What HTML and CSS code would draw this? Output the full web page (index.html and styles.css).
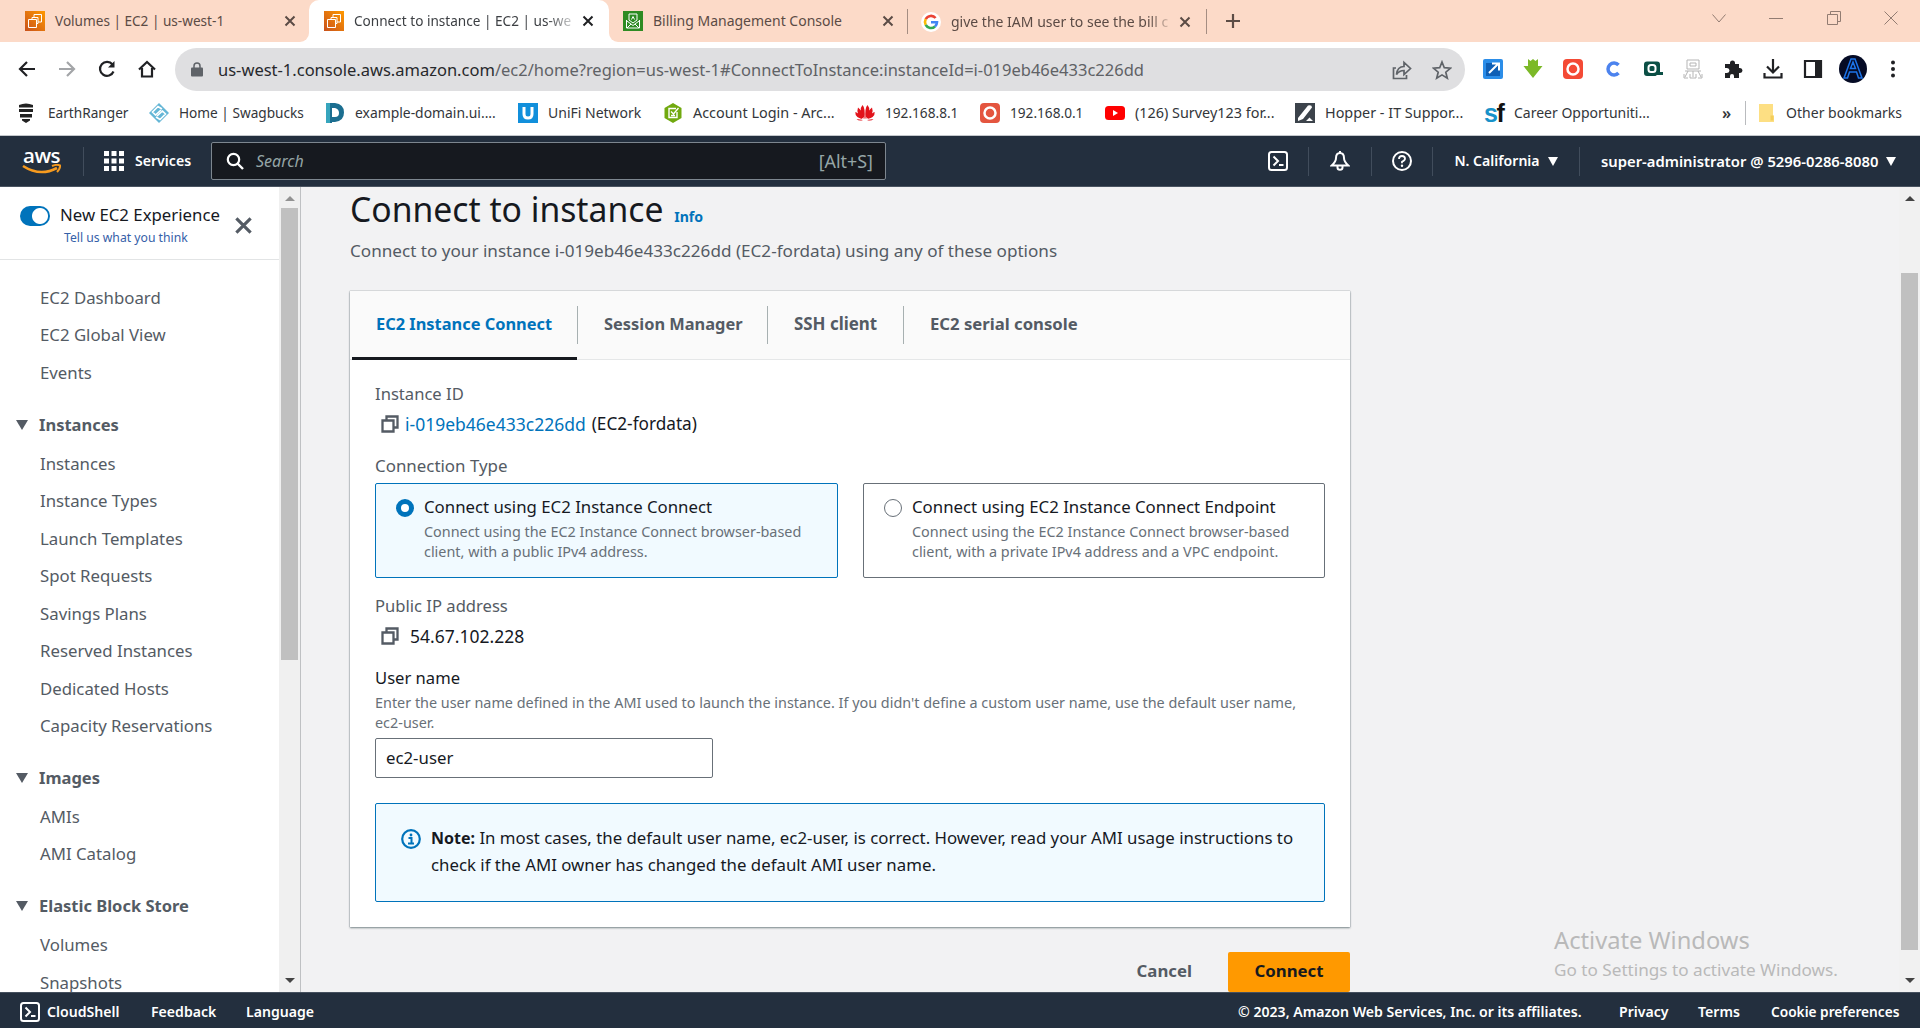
FILE: index.html
```html
<!DOCTYPE html>
<html lang="en">
<head>
<meta charset="utf-8">
<title>Connect to instance | EC2 | us-west-1</title>
<link rel="stylesheet" href="styles.css">
</head>
<body>
<svg class="defs" width="0" height="0">
  <symbol id="x" viewBox="0 0 12 12"><path d="M1.5 1.5l9 9M10.5 1.5l-9 9" fill="none" stroke="currentColor" stroke-width="2"/></symbol>
  <symbol id="ec2" viewBox="0 0 20 20"><defs><linearGradient id="og" x1="0" y1="1" x2="1" y2="0"><stop offset="0" stop-color="#c8511b"/><stop offset="1" stop-color="#f90"/></linearGradient></defs><path fill="url(#og)" d="M0 0h20v20H0z"/><g fill="none" stroke="#fff" stroke-width="1"><path d="M3.5 8.5h8v8h-8z"/><path d="M7 8.500V6.500h6v6h-1.500M9 6.500V3.500h7.500v7.500H13"/></g></symbol>
  <symbol id="copy" viewBox="0 0 18 18"><path d="M1.500 5.500h11v11h-11zM5.500 5V1.500h11v11H13" fill="none" stroke="currentColor" stroke-width="2.300"/></symbol>
  <symbol id="shell" viewBox="0 0 20 20"><rect x="1" y="1" width="18" height="18" rx="2.500" fill="none" stroke="currentColor" stroke-width="2"/><path d="M5.500 5.500l4.500 4.500-4.500 4.500M11 14h4.500" fill="none" stroke="currentColor" stroke-width="2"/></symbol>
  <symbol id="o-red" viewBox="0 0 20 20"><rect width="20" height="20" rx="4" fill="currentColor"/><circle cx="10" cy="10" r="5.500" fill="none" stroke="#fff" stroke-width="2.500"/></symbol>
</svg>

<header class="browser">
  <div class="tabs">
    <div class="tab"><svg class="fav"><use href="#ec2"/></svg><span class="tab-title tight">Volumes | EC2 | us-west-1</span><svg class="close"><use href="#x"/></svg></div>
    <div class="tab active"><svg class="fav"><use href="#ec2"/></svg><span class="tab-title tight fade">Connect to instance | EC2 | us-we</span><svg class="close"><use href="#x"/></svg></div>
    <div class="tab"><svg class="fav" viewBox="0 0 20 20"><path fill="#2e8b23" d="M0 0h20v20H0z"/><path d="M6 3h8v6l-4 3-4-3zM3.500 9v8h13V9M4 10l6 4.500 6-4.500M4 17l4-4M16 17l-4-4M8.500 8.500l1.500-3 1.500 3" fill="none" stroke="#fff"/></svg><span class="tab-title">Billing Management Console</span><svg class="close"><use href="#x"/></svg></div>
    <div class="tab divided"><svg class="fav" viewBox="0 0 20 20"><circle cx="10" cy="10" r="10" fill="#fff"/><g fill="none" stroke-width="2.600"><path d="M14.600 6A6 6 0 0 0 4.700 7.200" stroke="#ea4335"/><path d="M4.700 7.200a6 6 0 0 0 0 5.600" stroke="#fbbc05"/><path d="M4.700 12.800A6 6 0 0 0 14 14.500" stroke="#34a853"/><path d="M14 14.500A6 6 0 0 0 16 10.200H10" stroke="#4285f4"/></g></svg><span class="tab-title fade late">give the IAM user to see the bill c</span><svg class="close"><use href="#x"/></svg></div>
    <svg class="plus" viewBox="0 0 16 16"><path d="M8 1v14M1 8h14" stroke="#5c4c45" stroke-width="2.200"/></svg>
    <div class="window-buttons">
      <svg viewBox="0 0 14 14"><path d="M.5 3.500L7 11l6.500-7.500"/></svg>
      <svg viewBox="0 0 14 14"><path d="M0 7.500h14"/></svg>
      <svg viewBox="0 0 14 14"><path d="M.5 3.500h10v10H.5zM3.500 3.500v-3h10v10h-3"/></svg>
      <svg viewBox="0 0 14 14"><path d="M.5.5l13 13M13.500.5l-13 13"/></svg>
    </div>
  </div>

  <div class="toolbar">
    <div class="nav-buttons">
      <svg viewBox="0 0 18 18"><path d="M17 9H2M9 2L2 9l7 7"/></svg>
      <svg class="off" viewBox="0 0 18 18"><path d="M1 9h15M9 2l7 7-7 7"/></svg>
      <svg viewBox="0 0 18 18"><path d="M15.500 11.500A7 7 0 1 1 14.500 4.500"/><path d="M16.500 1v6.500H10z" fill="#202124" stroke="none"/></svg>
      <svg viewBox="0 0 18 18"><path d="M1 9.500L9 2l8 7.500M4 8v8.500h10V8"/></svg>
    </div>
    <div class="omnibox">
      <svg class="lock" viewBox="0 0 12 14"><rect y="5" width="12" height="9" rx="1" fill="#5f6368"/><path d="M3 6V3.500a3 3 0 0 1 6 0V6" fill="none" stroke="#5f6368" stroke-width="1.500"/></svg>
      <span class="url">us-west-1.console.aws.amazon.com<span class="path">/ec2/home?region=us-west-1#ConnectToInstance:instanceId=i-019eb46e433c226dd</span></span>
      <svg class="omni-icon" viewBox="0 0 20 20"><path d="M4 8H1.500v10.500h13V15M4.500 14.500c.5-5 3.500-8 7.500-8V2.500l6.500 6-6.500 6v-4c-3.500 0-5.500 1-7.500 4z"/></svg>
      <svg class="omni-icon" viewBox="0 0 20 20"><path d="M10 2l2.300 5.700 6.200.5-4.700 4 1.500 6L10 14.900l-5.300 3.300 1.500-6-4.700-4 6.200-.5z"/></svg>
    </div>
    <div class="extensions">
      <svg viewBox="0 0 20 20"><rect width="20" height="20" rx="2" fill="#2b8de8"/><path d="M3 4h14v13H3z" fill="#0f5fb5"/><path d="M6 14l9-9M9 4.500h7v7" fill="none" stroke="#fff" stroke-width="2"/></svg>
      <svg viewBox="0 0 20 20"><path d="M5 0l2.500 2L10 0l2.500 2L15 0v7h4.500L10 19 .5 7H5z" fill="#7cb928"/></svg>
      <svg class="ext-o"><use href="#o-red"/></svg>
      <svg viewBox="0 0 20 20"><path d="M15.500 6A6 6 0 1 0 15.500 14" fill="none" stroke="#4c83ee" stroke-width="3.500"/></svg>
      <svg viewBox="0 0 20 20"><path d="M4 2.500h10q3 0 3 3V13h3v3h-6l-1.500 1H4q-3 0-3-3V5.500q0-3 3-3z" fill="#0b4f45"/><rect x="5.500" y="6" width="7" height="7" rx="2.500" fill="none" stroke="#fff" stroke-width="2"/></svg>
      <svg viewBox="0 0 20 20"><path d="M4 1h12v9H4zM7 4h6v3H7zM2 12h16M5 12l-3 6M10 12v6M15 12l3 6M1 15v4h4M19 15v4h-4M7 15v4h6v-4" fill="none" stroke="#b5b5b5"/></svg>
      <svg viewBox="0 0 20 20"><path d="M2 5h5V4a2.500 2.500 0 0 1 5 0v1h4v4h1a2.500 2.500 0 0 1 0 5h-1v5h-5v-2a2 2 0 0 0-4 0v2H2v-5h2a2 2 0 0 0 0-5H2z" fill="#202124"/></svg>
      <svg viewBox="0 0 20 20"><path d="M10 0v13M4 7.500l6 6 6-6M1.500 14v4.500h17V14" fill="none" stroke="#202124" stroke-width="2.200"/></svg>
      <svg viewBox="0 0 20 20"><path d="M2 2h16v16H2z" fill="none" stroke="#202124" stroke-width="2.200"/><path d="M12 2h6v16h-6z" fill="#202124"/></svg>
      <svg class="avatar" viewBox="0 0 28 28"><circle cx="14" cy="14" r="14" fill="#050b25"/><path d="M5 23L12 4h4l7 19h-3.500l-2-6h-7l-2 6zM11.500 13.500h5L14 7z" fill="none" stroke="#1c74ea" stroke-width="1.500"/></svg>
      <svg viewBox="0 0 20 20"><g fill="#202124"><circle cx="10" cy="3.500" r="2"/><circle cx="10" cy="10" r="2"/><circle cx="10" cy="16.500" r="2"/></g></svg>
    </div>
  </div>

  <nav class="bookmarks">
    <span class="bm t1"><svg viewBox="0 0 20 20"><path d="M1 2q7-3 14 0v2.500H1zM1 6h14v3H1zM2 11h12v3.500H2zM4 16h8v1.500L8 20l-4-2.500z" fill="#222"/></svg>EarthRanger</span>
    <span class="bm t2"><svg viewBox="0 0 20 20"><path d="M10 0l10 10-10 10L0 10z" fill="#64b6d6"/><path d="M13 6L9 3.500 3.500 9l3 3L12 7M7 14l4 2.500 5.500-5.500-3-3L8 13" fill="none" stroke="#fff" stroke-width="1.600"/></svg>Home | Swagbucks</span>
    <span class="bm t3"><svg viewBox="0 0 20 20"><path d="M1 0h9q9 1 9 9.500T10 19H7v1H1z" fill="#1b6e90"/><path d="M7 5h3q4 1 4 5t-4 4H7z" fill="#fff"/><path d="M1 0h4v20H1z" fill="#36a5bd"/></svg>example-domain.ui....</span>
    <span class="bm"><svg viewBox="0 0 20 20"><path d="M0 0h20v20H0z" fill="#118fdb"/><path d="M6 4v7q0 4 4 4t4-4V4" fill="none" stroke="#fff" stroke-width="3"/></svg>UniFi Network</span>
    <span class="bm t4"><svg viewBox="0 0 20 20"><path d="M10 0l8.500 5v10L10 20l-8.500-5V5z" fill="#71a90f"/><path d="M14 9v5.500H6v-9h7M8 8.500l2.500 2.500 5-6M8 12.500h4" fill="none" stroke="#fff" stroke-width="1.400"/></svg>Account Login - Arc...</span>
    <span class="bm t1"><svg viewBox="0 0 20 20"><g fill="#e2131b"><path d="M9.500 16Q3 7 7.500 2q3 3 2 14zM10.500 16Q17 7 12.500 2q-3 3-2 14zM8.500 16Q.5 11 3 4.500 7 7 8.500 16zM11.500 16Q19.500 11 17 4.500 13 7 11.500 16zM7.500 16Q0 14.500.3 9 4 10 7.500 16zM12.500 16q7.500-1.500 7.200-7-3.700 1-7.200 7zM8 17q-4 1.500-6.500-1zM12 17q4 1.500 6.500-1z"/></g></svg>192.168.8.1</span>
    <span class="bm t1"><svg class="bm-o"><use href="#o-red"/></svg>192.168.0.1</span>
    <span class="bm t4"><svg viewBox="0 0 20 20"><rect y="3" width="20" height="14" rx="3.500" fill="#f00"/><path d="M8 7l5 3-5 3z" fill="#fff"/></svg>(126) Survey123 for...</span>
    <span class="bm t4"><svg viewBox="0 0 20 20"><path d="M0 0h20v20H0z" fill="#3c434b"/><path d="M3 15L13 2.500q4-1 4 2L8 16l-5 2zM11 18l3.500-3.500L18 18z" fill="#fff"/></svg>Hopper - IT Suppor...</span>
    <span class="bm"><span class="sf"><b>s</b>f</span>Career Opportuniti...</span>
    <span class="more">»</span>
    <span class="bm other"><svg viewBox="0 0 20 20"><path d="M2 1h14v11.500h1V19H2z" fill="#fddf83"/><path d="M13.500 12.500h3v5h-3z" fill="#f3cd5a"/></svg>Other bookmarks</span>
  </nav>
</header>

<div class="aws-nav">
  <div class="logo">aws<svg viewBox="0 0 40 11"><path d="M1 2q17 11 34 2" fill="none" stroke="#f79b1f" stroke-width="2.600"/><path d="M30 2q5-2 8-.5Q38.500 4 35 8" fill="none" stroke="#f79b1f" stroke-width="2"/></svg></div>
  <div class="services"><svg viewBox="0 0 20 20"><path fill="#fff" d="M0 0h5v5H0zM7.500 0h5v5h-5zM15 0h5v5h-5zM0 7.500h5v5H0zM7.500 7.500h5v5h-5zM15 7.500h5v5h-5zM0 15h5v5H0zM7.500 15h5v5h-5zM15 15h5v5h-5z"/></svg>Services</div>
  <div class="search"><svg viewBox="0 0 18 18"><circle cx="7.500" cy="7.500" r="5.700" fill="none" stroke="#fff" stroke-width="2.200"/><path d="M11.500 11.500l5.500 5.500" stroke="#fff" stroke-width="2.400"/></svg><i>Search</i><span>[Alt+S]</span></div>
  <div class="aws-tools">
    <div><svg><use href="#shell"/></svg></div>
    <div><svg viewBox="0 0 20 20"><path d="M10 2C7 2 6 4.500 6 7c0 3.500-1.500 5-4.300 7.500h16.600C15.500 12 14 10.500 14 7c0-2.500-1-5-4-5zM7.500 15v1.500q0 2.300 2.500 2.300t2.500-2.300V15M10 0v2" fill="none" stroke="#fff" stroke-width="2"/></svg></div>
    <div><svg viewBox="0 0 20 20"><circle cx="10" cy="10" r="9" fill="none" stroke="#fff" stroke-width="2"/><path d="M7 8q0-3 3-3t3 2.700q0 1.600-3 3v1.500" fill="none" stroke="#fff" stroke-width="1.800"/><circle cx="10" cy="14.700" r="1.200" fill="#fff"/></svg></div>
    <div>N. California<i class="caret"></i></div>
    <div class="account">super-administrator @ 5296-0286-8080<i class="caret"></i></div>
  </div>
</div>

<div class="page">
  <aside class="side">
    <div class="side-content">
      <div class="side-head">
        <span class="toggle"></span>
        <div class="experience">New EC2 Experience<a>Tell us what you think</a></div>
        <svg><use href="#x"/></svg>
      </div>
      <ul class="menu">
        <li>EC2 Dashboard</li><li>EC2 Global View</li><li>Events</li>
        <li class="group">Instances</li>
        <li>Instances</li><li>Instance Types</li><li>Launch Templates</li><li>Spot Requests</li><li>Savings Plans</li><li>Reserved Instances</li><li>Dedicated Hosts</li><li>Capacity Reservations</li>
        <li class="group">Images</li>
        <li>AMIs</li><li>AMI Catalog</li>
        <li class="group">Elastic Block Store</li>
        <li>Volumes</li><li>Snapshots</li>
      </ul>
    </div>
    <div class="scrollbar side-scroll"><i class="up"></i><i class="thumb"></i><i class="down"></i></div>
  </aside>

  <main class="main">
    <h1>Connect to instance <a>Info</a></h1>
    <p class="lead">Connect to your instance i-019eb46e433c226dd (EC2-fordata) using any of these options</p>
    <section class="card">
      <div class="card-tabs">
        <span class="selected">EC2 Instance Connect</span><span class="tab2">Session Manager</span><span class="tab3">SSH client</span><span class="tab4">EC2 serial console</span>
      </div>
      <div class="card-body">
        <div class="label">Instance ID</div>
        <div class="value"><svg><use href="#copy"/></svg><a>i-019eb46e433c226dd</a><span class="alias">(EC2-fordata)</span></div>
        <div class="label type-label">Connection Type</div>
        <div class="tiles">
          <div class="tile checked"><span class="radio"></span><div><div class="tile-title">Connect using EC2 Instance Connect</div><div class="hint">Connect using the EC2 Instance Connect browser-based<br>client, with a public IPv4 address.</div></div></div>
          <div class="tile"><span class="radio"></span><div><div class="tile-title">Connect using EC2 Instance Connect Endpoint</div><div class="hint">Connect using the EC2 Instance Connect browser-based<br>client, with a private IPv4 address and a VPC endpoint.</div></div></div>
        </div>
        <div class="label ip-label">Public IP address</div>
        <div class="value ip"><svg><use href="#copy"/></svg><span>54.67.102.228</span></div>
        <div class="label dark">User name</div>
        <div class="hint">Enter the user name defined in the AMI used to launch the instance. If you didn't define a custom user name, use the default user name,<br>ec2-user.</div>
        <div class="input">ec2-user</div>
        <div class="note"><svg viewBox="0 0 20 20"><circle cx="10" cy="10" r="8.800" fill="none" stroke="#0073bb" stroke-width="2.200"/><path d="M7.500 9H10.500v5.200M7 14.500h6" fill="none" stroke="#0073bb" stroke-width="2"/><circle cx="10" cy="6" r="1.400" fill="#0073bb"/></svg><p><b>Note:</b> In most cases, the default user name, ec2-user, is correct. However, read your AMI usage instructions to<br>check if the AMI owner has changed the default AMI user name.</p></div>
      </div>
    </section>
    <div class="actions"><span>Cancel</span><span class="primary">Connect</span></div>
  </main>

  <div class="scrollbar page-scroll"><i class="up"></i><i class="thumb"></i><i class="down"></i></div>
  <div class="watermark"><div>Activate Windows</div>Go to Settings to activate Windows.</div>
</div>

<footer class="footer">
  <svg><use href="#shell"/></svg><span class="f-shell">CloudShell</span><span class="f-feed">Feedback</span><span>Language</span>
  <span class="copyright">© 2023, Amazon Web Services, Inc. or its affiliates.</span><span class="f-privacy">Privacy</span><span class="f-terms">Terms</span><span class="f-cookie">Cookie preferences</span>
</footer>
</body>
</html>
```
FILE: styles.css
```css
* { box-sizing: border-box; }
body { margin: 0; width: 1920px; height: 1028px; overflow: hidden; display: flex; flex-direction: column; font: 16.8px/24px "Noto Sans", "Open Sans", sans-serif; color: #16191f; background: #f2f2f3; }
.defs { position: absolute; }
svg { flex: none; display: block; }
h1, p, ul { margin: 0; padding: 0; font-weight: 400; }

/* browser chrome */
.browser { height: 136px; background: #fff; border-bottom: 1px solid #c4c8cc; font-size: 14px; }
.tabs { height: 42px; display: grid; grid-template-columns: 309px 300px 298px 300px 52px 1fr; background: linear-gradient(90deg, #fff 0, #fff 640px, #fcdac8 640px); }
.tab { display: flex; align-items: center; padding: 0 13px 0 25px; background: #fcdac8; color: #5b4b45; }
.tab:nth-child(1) { border-bottom-right-radius: 9px; }
.tab:nth-child(3) { padding: 0 13px 0 14px; border-bottom-left-radius: 9px; }
.tab.active { background: linear-gradient(#fcdac8 50%, #fff 50%); color: #3c3f43; padding: 0 15px; position: relative; z-index: 0; }
.active::before { content: ""; position: absolute; inset: 0; border-radius: 10px 10px 0 0; background: #fff; z-index: -1; }
.divided { padding: 0 15px 0 13px; margin: 9px 0 8px; border: solid #a48d82; border-width: 0 1px; }
.fav { width: 20px; height: 20px; }
.tab-title { margin-left: 10px; width: 224px; white-space: nowrap; line-height: 24px; }
.tight { font-size: 13.6px; }
.fade { -webkit-mask-image: linear-gradient(90deg, #000 86%, rgba(0,0,0,.2) 98%); mask-image: linear-gradient(90deg, #000 86%, rgba(0,0,0,.2) 98%); }
.late { -webkit-mask-image: linear-gradient(90deg, #000 88%, rgba(0,0,0,.15) 98%); mask-image: linear-gradient(90deg, #000 88%, rgba(0,0,0,.15) 98%); }
.close { width: 12px; height: 12px; margin-left: auto; }
.active .close { color: #202124; }
.plus { width: 16px; height: 16px; place-self: center; }
.window-buttons { display: flex; justify-content: flex-end; gap: 43.500px; padding: 11px 22px 0 0; }
.window-buttons svg { width: 14px; height: 14px; fill: none; stroke: #927c72; }
.toolbar { height: 52px; padding-top: 6px; display: flex; }
.nav-buttons { width: 175px; padding-left: 18px; display: flex; align-items: center; gap: 22px; height: 41px; }
.nav-buttons svg { width: 18px; height: 18px; fill: none; stroke: #202124; stroke-width: 2.200; }
.nav-buttons .off { stroke: #a3a5a8; }
.omnibox { width: 1290px; height: 43px; border-radius: 22px; background: #dfdfe1; display: flex; align-items: center; padding: 0 13px 0 16px; }
.lock { width: 12px; height: 15px; margin-right: 15px; }
.url { font-size: 16.500px; color: #27292c; margin-right: auto; white-space: nowrap; }
.path { color: #606266; }
.omni-icon { width: 20px; height: 20px; margin-left: 20px; fill: none; stroke: #5f6368; stroke-width: 1.700; }
.extensions { display: grid; grid-template-columns: repeat(11, 40px); height: 42px; align-items: center; justify-items: center; margin-left: 7.500px; }
.extensions svg { width: 20px; height: 20px; }
.extensions .avatar { width: 28px; height: 28px; }
.ext-o { color: #f44a35; }
.bookmarks { height: 38px; padding: 0 18px; display: grid; grid-template-columns: 131px 176px 193px 145px 192px 125px 125px 190px 189px 238px 21px 1fr; align-items: center; color: #33363a; }
.bm { display: flex; align-items: center; gap: 10px; white-space: nowrap; }
.bm svg { width: 20px; height: 20px; }
.t1, .t2 { font-size: 13.650px; }
.t3 { font-size: 13.900px; }
.t4 { font-size: 14.400px; }
.bm-o { color: #e4553f; }
.sf { width: 20px; font: 700 25px/20px "Liberation Sans", sans-serif; letter-spacing: -1.500px; color: #111; }
.sf b { color: #1892c9; }
.more { font-weight: 600; font-size: 16px; }
.other { border-left: 1px solid #b9bbbe; padding-left: 11px; height: 24px; justify-self: end; gap: 9px; }

/* console navigation */
.aws-nav { height: 51px; background: #232f3e; border-bottom: 1px solid #4a5461; color: #fff; display: flex; align-items: center; font-size: 14.100px; font-weight: 600; }
.logo { width: 84px; height: 29px; border-right: 1px solid #414d5c; padding-left: 23px; font: 600 20.500px/16px "Open Sans", sans-serif; letter-spacing: -.5px; }
.logo svg { width: 40px; height: 11px; margin: 1px 0 0 -1px; }
.services { width: 127px; padding-left: 20px; display: flex; align-items: center; gap: 11px; }
.services svg { width: 20px; height: 20px; }
.search { width: 675px; height: 38px; border: 1px solid #7d868f; border-radius: 2px; background: #16191f; display: flex; align-items: center; padding: 0 12px 0 14px; font-size: 17px; font-weight: 400; color: #95a5a6; }
.search svg { width: 18px; height: 18px; margin-right: 12px; }
.search i { font-size: 16px; }
.search span { margin-left: auto; font-size: 17.900px; }
.aws-tools { margin-left: auto; display: grid; grid-template-columns: 61px 63px 61px 147px 341px; height: 29px; }
.aws-tools div { border-left: 1px solid #414d5c; display: flex; align-items: center; justify-content: center; }
.aws-tools div:first-child { border-left: 0; }
.aws-tools .account { font-size: 14.800px; justify-content: flex-start; padding-left: 21px; }
.aws-tools svg { width: 20px; height: 20px; }
.caret { margin-left: 8px; border: 5px solid transparent; border-top: 9px solid #fff; border-bottom: 0; }

/* page */
.page { height: 805px; display: flex; position: relative; overflow: hidden; }
.side { width: 301px; display: flex; background: #fff; border-right: 1px solid #bfc1c3; }
.side-content { width: 279px; }
.side-head { height: 73px; border-bottom: 1px solid #e2e4e5; display: flex; padding: 16px 0 0 20px; }
.toggle { width: 30px; height: 20px; margin-top: 3px; border-radius: 10px; background: radial-gradient(circle at 20px 10px, #fff 7.500px, #0073bb 8.500px); }
.experience { width: 184px; padding-left: 10px; white-space: nowrap; }
.experience a { display: block; font-size: 12.200px; line-height: 22px; padding-left: 4px; color: #3560a8; }
.side-head svg { width: 19px; height: 19px; margin-top: 13px; color: #545b64; }
.menu { list-style: none; padding-top: 19px; color: #545b64; }
.menu li { height: 37.500px; padding-left: 40px; display: flex; align-items: center; }
.menu .group { margin: 14.500px 0 1.300px; padding-left: 16px; font-weight: 700; font-size: 16.500px; }
.group::before { content: ""; border: 6px solid transparent; border-top: 10px solid #545b64; border-bottom: 0; margin-right: 11px; }
.scrollbar { display: flex; flex-direction: column; align-items: center; background: #f0f0f0; }
.scrollbar i { flex: none; }
.up { margin-top: 9px; border: 5px solid transparent; border-bottom: 5px solid #929292; border-top: 0; }
.down { margin: auto 0 9px; border: 5px solid transparent; border-top: 5px solid #444; border-bottom: 0; }
.thumb { width: 17px; background: #c0c0c0; }
.side-scroll { width: 21px; }
.side-scroll .thumb { margin-top: 7px; height: 452px; }
.page-scroll { width: 21px; margin-left: auto; background: #f1f1f1; }
.page-scroll .thumb { margin-top: 72px; height: 677px; }
.page-scroll .up { border-bottom-color: #444; }

.main { width: 1000px; margin-left: 49px; }
h1 { font-size: 33.700px; line-height: 44px; }
h1 a { font-size: 14.100px; font-weight: 700; color: #0073bb; margin-left: 2px; }
.lead { font-size: 17.130px; color: #545b64; }
.card { margin-top: 28px; height: 636px; background: #fff; box-shadow: 0 1px 2px rgba(0,28,36,.45), 0 0 1px rgba(0,28,36,.5); }
.card-tabs { height: 69px; background: #fafafa; border-bottom: 1px solid #e5e7e8; display: flex; padding-left: 2px; color: #545b64; font-weight: 700; font-size: 16.400px; }
.card-tabs span { height: 38px; margin-top: 15px; line-height: 36px; padding-left: 26px; white-space: nowrap; border-left: 1px solid #a7b0b1; }
.card-tabs .selected { width: 225px; height: 69px; margin-top: 0; padding: 15px 0 0 24px; border-left: 0; border-bottom: 3px solid #16191f; color: #0073bb; }
.card-tabs .tab2 { width: 190px; }
.card-tabs .tab3 { width: 136px; font-size: 16.900px; }
.card-tabs .tab4 { font-size: 16.700px; }
.card-body { padding: 22px 25px 0; }
.label { color: #545b64; font-size: 16.600px; }
.value { height: 24px; margin-top: 6px; padding-left: 6px; display: flex; align-items: center; font-size: 17.500px; }
.value svg { width: 18px; height: 18px; color: #545b64; margin-right: 6px; }
.value a { color: #0073bb; }
.alias { margin-left: 6px; font-size: 17.200px; }
.type-label { margin-top: 18px; font-size: 16.900px; }
.tiles { margin-top: 5px; display: grid; grid-template-columns: 463px 462px; gap: 25px; }
.tile { height: 95px; border: 1px solid #687078; border-radius: 2px; display: flex; padding: 10px 0 0 20px; white-space: nowrap; background: #fff; }
.tile-title { line-height: 26px; }
.tile.checked { background: #f1faff; border-color: #0073bb; }
.radio { width: 18px; height: 18px; border: 1.500px solid #687078; border-radius: 50%; margin: 5px 10px 0 0; background: #fff; }
.checked .radio { border: 5.500px solid #0073bb; }
.hint { font-size: 14.400px; line-height: 20px; color: #687078; white-space: nowrap; }
.tile .hint { margin-top: 2px; }
.ip-label { margin-top: 16px; }
.ip svg { margin-right: 11px; }
.dark { color: #16191f; margin-top: 18px; }
.dark + .hint { margin-top: 3px; }
.input { width: 338px; height: 40px; margin-top: 5px; border: 1px solid #687078; border-radius: 2px; line-height: 37px; padding-left: 10px; }
.note { margin-top: 25px; height: 99px; border: 1px solid #0073bb; border-radius: 2px; background: #f1faff; display: flex; padding: 21px 0 0 25px; }
.note svg { width: 20px; height: 20px; margin: 4px 10px 0 0; }
.note p { line-height: 26.500px; white-space: nowrap; font-size: 16.820px; }
.note b { font-size: 16px; }
.actions { display: flex; justify-content: flex-end; margin-top: 25px; line-height: 38px; font-weight: 700; color: #545b64; }
.primary { width: 122px; height: 40px; margin-left: 36px; background: #f90; border-radius: 2px; text-align: center; color: #16191f; }
.watermark { position: absolute; left: 1554px; top: 738px; color: #b9b9b9; font-size: 17.150px; line-height: 28px; }
.watermark div { font-size: 23.700px; line-height: 31px; }

.footer { height: 36px; background: #232f3e; border-top: 1px solid #45505e; color: #fff; display: flex; align-items: center; padding: 2px 20px 0; font-size: 14.100px; font-weight: 600; white-space: nowrap; }
.footer svg { width: 20px; height: 20px; margin-right: 7px; }
.f-shell { width: 104px; }
.f-feed { width: 95px; }
.copyright { margin-left: auto; width: 381px; }
.f-privacy { width: 79px; }
.f-terms { width: 73px; }
.f-cookie { width: 129px; font-size: 13.700px; }
```
